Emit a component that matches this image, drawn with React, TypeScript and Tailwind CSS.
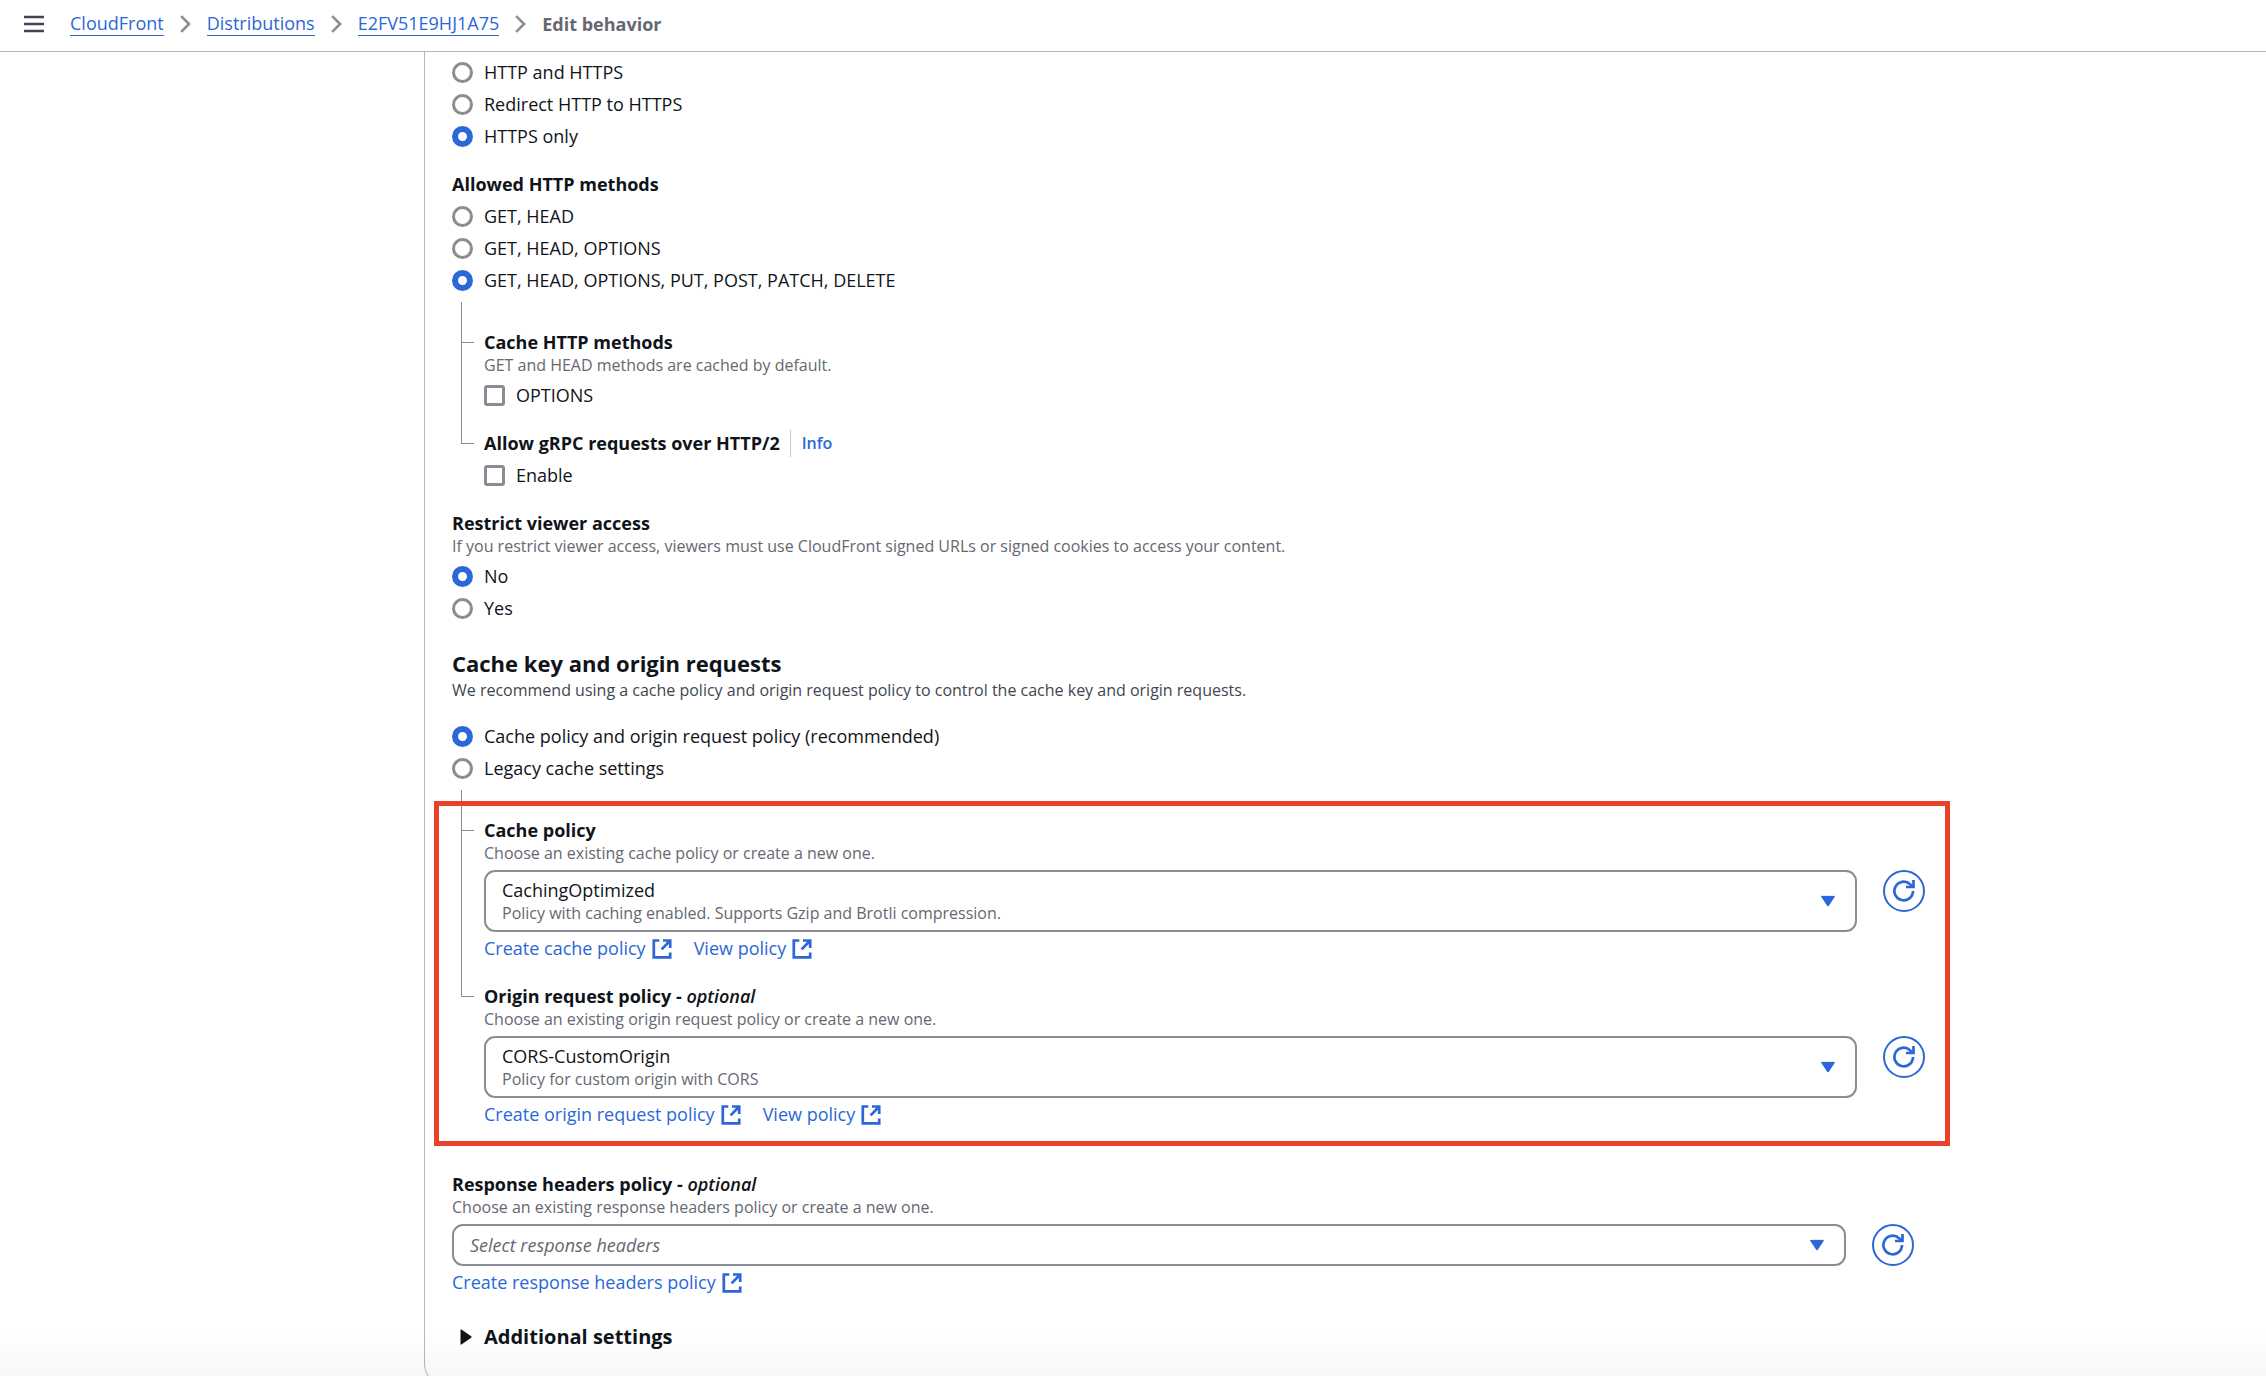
import { useId, useState, type ReactNode } from "react";
import clsx from "clsx";

const CRUMBS = ["CloudFront", "Distributions", "E2FV51E9HJ1A75"];

const PROTOCOLS = ["HTTP and HTTPS", "Redirect HTTP to HTTPS", "HTTPS only"];
const METHODS = ["GET, HEAD", "GET, HEAD, OPTIONS", "GET, HEAD, OPTIONS, PUT, POST, PATCH, DELETE"];
const CACHE_MODES = ["Cache policy and origin request policy (recommended)", "Legacy cache settings"];

function MenuIcon() {
  return (
    <svg width="20" height="18" viewBox="0 0 20 18" stroke="#424650" strokeWidth="2.6" aria-hidden="true">
      <path d="M0 2h20M0 9h20M0 16h20" />
    </svg>
  );
}

function ChevronIcon() {
  return (
    <svg width="11" height="18" viewBox="0 0 11 18" fill="none" stroke="#8c8c94" strokeWidth="2.6" aria-hidden="true">
      <path d="M1.2 1.2 9 9l-7.8 7.8" />
    </svg>
  );
}

function ExternalIcon() {
  return (
    <svg width="20" height="20" viewBox="0 0 20 20" fill="none" stroke="currentColor" strokeWidth="2.7" aria-hidden="true">
      <path d="M7.3 1.5H1.8v16.8h16.4v-4.8M11 1.5h7.2V9M18 1.7 9.6 10.4" />
    </svg>
  );
}

function RefreshIcon() {
  return (
    <svg width="22" height="22" viewBox="0 0 22 22" fill="none" stroke="currentColor" strokeWidth="2.7" aria-hidden="true">
      <path d="M20 11a9.3 9.3 0 1 1-3-6.800l3 2.600" />
      <path d="M20.500 0v7h-7.500" />
    </svg>
  );
}

function CaretIcon() {
  return (
    <svg
      width="14"
      height="11"
      viewBox="0 0 14 11"
      fill="#2b67d9"
      stroke="#2b67d9"
      strokeWidth="1.6"
      strokeLinejoin="round"
      className="pointer-events-none absolute right-[20px] top-1/2 -translate-y-1/2"
      aria-hidden="true"
    >
      <path d="M1 1h12L7 10z" />
    </svg>
  );
}

function RadioGroup({ label, options, initial }: { label: string; options: string[]; initial: number }) {
  const name = useId();
  const [selected, setSelected] = useState(initial);
  return (
    <div role="radiogroup" aria-label={label} className="flex flex-col items-start gap-[5px]">
      {options.map((option, i) => (
        <label key={option} className="flex h-[27px] items-center gap-[11px]">
          <input
            type="radio"
            name={name}
            checked={selected === i}
            onChange={() => setSelected(i)}
            className="size-[21px] shrink-0 appearance-none rounded-full border-[3px] border-[#8c8c94] bg-white checked:border-[6px] checked:border-[#2b67d9]"
          />
          {option}
        </label>
      ))}
    </div>
  );
}

function Checkbox({ label }: { label: string }) {
  return (
    <label className="mt-[5px] flex h-[27px] items-center gap-[11px]">
      <input
        type="checkbox"
        className="size-[21px] shrink-0 appearance-none rounded-[3px] border-[3px] border-[#8c8c94] bg-white checked:border-[#2b67d9] checked:bg-[#2b67d9]"
      />
      {label}
    </label>
  );
}

function Hint({ children }: { children: ReactNode }) {
  return <p className="pb-[2px] text-[16px] leading-[19px] text-[#656871]">{children}</p>;
}

function ExternalLink({ children }: { children: ReactNode }) {
  return (
    <a href="#" className="flex items-center gap-[6px] text-[#2b67d9]">
      {children}
      <ExternalIcon />
    </a>
  );
}

function PolicySelect({
  label,
  optional,
  hint,
  value,
  description,
  links,
}: {
  label: string;
  optional?: boolean;
  hint: string;
  value: string;
  description?: string;
  links: string[];
}) {
  const id = useId();
  return (
    <div>
      <label htmlFor={id} className="block font-bold">
        {label}
        {optional ? (
          <>
            {" - "}
            <i className="font-semibold">optional</i>
          </>
        ) : null}
      </label>
      <Hint>{hint}</Hint>
      <div className="mt-[5px] flex items-start gap-[26px]">
        <div className="relative flex-1 rounded-[11px] border-2 border-[#8c8c94] bg-white">
          <select
            id={id}
            className={clsx(
              "block w-full appearance-none px-[16px] outline-none",
              description ? "h-[32px] pt-[5px]" : "h-[38px] italic text-[#656871]",
            )}
          >
            <option>{value}</option>
          </select>
          {description ? (
            <p className="h-[26px] px-[16px] text-[16px] leading-[19px] text-[#656871]">{description}</p>
          ) : null}
          <CaretIcon />
        </div>
        <button
          type="button"
          aria-label="Refresh"
          className="flex size-[42px] items-center justify-center rounded-full border-2 border-[#2b67d9] text-[#2b67d9]"
        >
          <RefreshIcon />
        </button>
      </div>
      <div className="mt-[3px] flex gap-[22px]">
        {links.map((link) => (
          <ExternalLink key={link}>{link}</ExternalLink>
        ))}
      </div>
    </div>
  );
}

// Nested fields hanging off a radio: one vertical rule with a short branch
// to the heading of each child.
function Tree({ first, last }: { first: ReactNode; last: ReactNode }) {
  return (
    <ul className="mt-[8px]">
      <li className="relative pb-[21px] pl-[32px] pt-[27px]">
        <span className="absolute bottom-0 left-[9px] top-0 border-l border-[#8c8c94]" />
        <span className="absolute left-[9px] top-[40px] w-[13px] border-t border-[#8c8c94]" />
        {first}
      </li>
      <li className="relative pl-[32px]">
        <span className="absolute left-[9px] top-0 h-[14px] w-[13px] border-b border-l border-[#8c8c94]" />
        {last}
      </li>
    </ul>
  );
}

function Header() {
  return (
    <header className="flex h-[52px] shrink-0 items-center border-b border-[#b6b6bd] bg-white px-[24px] pb-[3px]">
      <button type="button" aria-label="Open navigation" className="mr-[26px]">
        <MenuIcon />
      </button>
      <nav aria-label="Breadcrumbs" className="flex items-center gap-[16px]">
        {CRUMBS.map((crumb) => (
          <span key={crumb} className="flex items-center gap-[16px]">
            <a href="#" className="border-b border-[#2b67d9] leading-[23px] text-[#2b67d9]">
              {crumb}
            </a>
            <ChevronIcon />
          </span>
        ))}
        <span className="font-bold leading-[24px] text-[#656871]">Edit behavior</span>
      </nav>
    </header>
  );
}

export default function App() {
  return (
    <div className="relative flex h-screen flex-col overflow-hidden bg-white font-['Open_Sans',sans-serif] text-[18px] leading-[27px] text-[#0f141a]">
      <Header />
      <main className="ml-[424px] rounded-bl-[21px] border-b border-l border-[#b6b6bd] pb-[32px] pl-[27px] pr-[352px] pt-[7px]">
        <RadioGroup label="Viewer protocol policy" options={PROTOCOLS} initial={2} />

        <section className="mt-[21px]">
          <h3 className="mb-[5px] font-bold">Allowed HTTP methods</h3>
          <RadioGroup label="Allowed HTTP methods" options={METHODS} initial={2} />
          <Tree
            first={
              <>
                <h4 className="font-bold">Cache HTTP methods</h4>
                <Hint>GET and HEAD methods are cached by default.</Hint>
                <Checkbox label="OPTIONS" />
              </>
            }
            last={
              <>
                <div className="flex items-center">
                  <h4 className="font-bold">Allow gRPC requests over HTTP/2</h4>
                  <a href="#" className="ml-[10px] border-l border-[#c6c6cd] pl-[11px] text-[16px] font-semibold text-[#2b67d9]">
                    Info
                  </a>
                </div>
                <Checkbox label="Enable" />
              </>
            }
          />
        </section>

        <section className="mt-[21px]">
          <h3 className="font-bold">Restrict viewer access</h3>
          <Hint>
            If you restrict viewer access, viewers must use CloudFront signed URLs or signed cookies to access your
            content.
          </Hint>
          <div className="mt-[5px]">
            <RadioGroup label="Restrict viewer access" options={["No", "Yes"]} initial={0} />
          </div>
        </section>

        <section className="mt-[25px]">
          <h2 className="text-[22px] font-bold leading-[32px]">Cache key and origin requests</h2>
          <p className="mb-[22px] text-[16px] leading-[22px] text-[#424650]">
            We recommend using a cache policy and origin request policy to control the cache key and origin requests.
          </p>
          <RadioGroup label="Cache key and origin requests" options={CACHE_MODES} initial={0} />
          <div className="relative -mr-[11px]">
            <Tree
              first={
                <PolicySelect
                  label="Cache policy"
                  hint="Choose an existing cache policy or create a new one."
                  value="CachingOptimized"
                  description="Policy with caching enabled. Supports Gzip and Brotli compression."
                  links={["Create cache policy", "View policy"]}
                />
              }
              last={
                <PolicySelect
                  label="Origin request policy"
                  optional
                  hint="Choose an existing origin request policy or create a new one."
                  value="CORS-CustomOrigin"
                  description="Policy for custom origin with CORS"
                  links={["Create origin request policy", "View policy"]}
                />
              }
            />
            {/* highlight frame around the two policy fields */}
            <div className="pointer-events-none absolute -bottom-[18px] -left-[18px] -right-[25px] top-[11px] border-[5px] border-[#ec4028]" />
          </div>
        </section>

        <section className="mt-[43px]">
          <PolicySelect
            label="Response headers policy"
            optional
            hint="Choose an existing response headers policy or create a new one."
            value="Select response headers"
            links={["Create response headers policy"]}
          />
        </section>

        <button type="button" className="mt-[26px] flex items-center pl-[8px] text-[20px] font-bold leading-[30px]">
          <svg width="12" height="16" viewBox="0 0 12 16" className="mr-[12px]" fill="currentColor" aria-hidden="true">
            <path d="M1.5 0.5 11.5 7.5v1l-10 7H0.5v-15z" />
          </svg>
          Additional settings
        </button>
      </main>
      <div className="pointer-events-none absolute inset-x-0 bottom-0 h-[44px] bg-linear-to-b from-transparent to-black/3" />
    </div>
  );
}
